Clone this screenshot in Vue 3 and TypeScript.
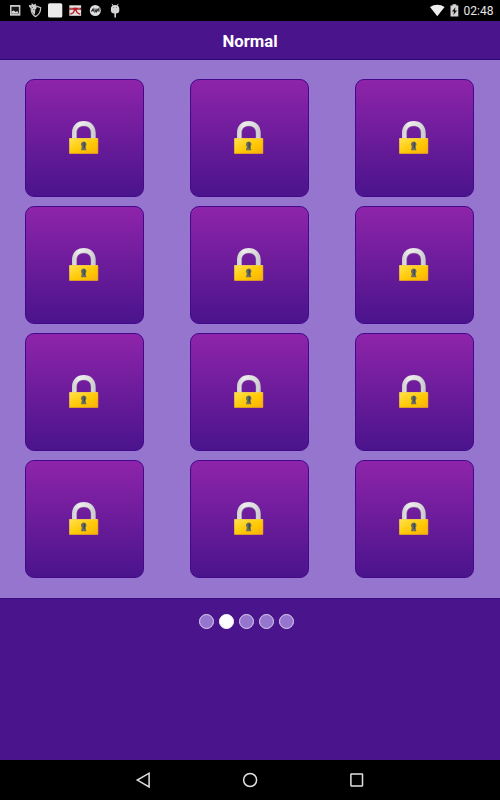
<script setup lang="ts">
const levels: number[] = Array.from({ length: 12 }, (_, i) => i + 1)
const pages: number[] = [0, 1, 2, 3, 4]
const currentPage = 1
</script>

<template>
  <div class="screen">
    <div class="status">
      <svg class="notifications" width="130" height="21" viewBox="0 0 130 21">
        <path d="M10 5h10.400v10.700H10z" fill="#c9c9c9" />
        <path d="M11.500 6.800h7.400v6.800h-7.400z" fill="#161616" />
        <path d="M11.500 13.600v-2l2.200-1 2 1.500 1.500-1 1.700 2.500z" fill="#d8d8d8" />
        <path d="M31 7.500l4.600-1.500 5.100 1.600c0 4.200-1.400 7.200-5.100 9-3.300-1.600-4.600-4.800-4.600-9.100z" fill="#090909" stroke="#c4c4c4" stroke-width="1.200" />
        <path d="M29 5l2.500.3.200-2.200 2 1.600 2.200-1.200-.3 2.500 1.200 1.700-1.400 1.900-.6 5.200-2-1.700c-.9-1.600-1.200-3.500-1.300-4.500L29.200 7z" fill="#cfcfcf" />
        <path d="M31.500 6.800l1.500.8M33.200 9.500l1.300.4" stroke="#444" stroke-width=".8" />
        <rect x="48" y="3.200" width="14.300" height="14.300" rx="1.500" fill="#eaeaea" />
        <path d="M69.300 5.300h11.800v10.500H69.300z" fill="#e3e3e3" />
        <path d="M69.300 7.800h11.800v2H69.300z" fill="#a61e26" />
        <path d="M70.500 8.800h2.200M77.800 8.800H80" stroke="#dca2a6" stroke-width=".6" />
        <path d="M74 7.700h2.500v3H74z" fill="#b71820" />
        <path d="M74.600 10l-1.300 2.800-3 1.300M75.900 10l1.300 2.800 3 1.300" fill="none" stroke="#bd1c26" stroke-width="1.400" />
        <circle cx="95.300" cy="10.500" r="5.500" fill="#dedede" />
        <path d="M91.300 11.500l1.800-2.700.6 2.700M91.800 10.600h1.700M95 8.500v3.300l1.400-1.500M97 8.500l-.3 3 2.200-2.800v3" fill="none" stroke="#303030" stroke-width="1.100" />
        <path d="M112 3.800l1.200 2.200M118.200 3.800L117 6" stroke="#ccc" stroke-width=".9" />
        <path d="M110.900 8.500c0-2.100 1.700-3.500 4.200-3.500s4.200 1.400 4.200 3.500v2.200c0 1.700-1.300 2.600-3.300 2.700v4.100h-1.600v-4.100c-2.200-.1-3.500-1-3.500-2.700z" fill="#d5d5d5" />
        <path d="M113.300 7.500h.8M116.200 7.500h.8" stroke="#666" stroke-width=".8" />
      </svg>
      <div class="system">
        <svg width="34" height="21" viewBox="0 0 34 21">
          <path d="M0 7.100c4-3.300 10.600-3.300 14.600 0L7.300 16.200z" fill="#ededed" />
          <path d="M20.500 5.500h2V4.200h3.800v1.300h2v11h-7.800z" fill="#d3d3d3" />
          <path d="M25.500 7.200l-3.600 4.300H24l-.6 3.500 3.700-4.600h-2.200z" fill="#111" />
        </svg>
        <span class="clock">02:48</span>
      </div>
    </div>
    <header class="header">Normal</header>
    <main class="levels">
      <button v-for="level in levels" :key="level" class="tile" type="button">
        <svg width="30" height="34" viewBox="0 -.6 30 34">
          <defs>
            <linearGradient id="steel" x1="0" y1="0" x2="1" y2="0">
              <stop offset="0" stop-color="#cecece" />
              <stop offset=".3" stop-color="#ededed" />
              <stop offset=".75" stop-color="#dddddd" />
              <stop offset="1" stop-color="#c6c6c8" />
            </linearGradient>
            <linearGradient id="gold" x1="0" y1="0" x2="1" y2="1">
              <stop offset="0" stop-color="#ffe351" />
              <stop offset=".42" stop-color="#ffce13" />
              <stop offset=".65" stop-color="#ffc400" />
              <stop offset="1" stop-color="#f5ad16" />
            </linearGradient>
          </defs>
          <path d="M3 18v-5.700C3 5.200 7.900.5 14.800.5s11.900 4.700 11.900 11.800V18H22v-5.700c0-4.300-2.700-6.800-7.200-6.800s-7.200 2.500-7.200 6.800V18z" fill="url(#steel)" />
          <path d="M7.600 18v-5.700c0-4.300 2.700-6.800 7.200-6.800S22 8 22 12.300V18" fill="none" stroke="#a6a0ad" stroke-width=".5" />
          <rect x=".2" y="17.700" width="28.900" height="15.400" rx=".4" fill="url(#gold)" />
          <path d="M.4 18.100h28.500" stroke="#ffde4d" stroke-width=".7" />
          <path d="M.4 32.800h28.500M28.800 18.200v14.500" stroke="#e89c25" stroke-width=".5" />
          <path d="M14.700 20.900a2.900 2.900 0 0 1 1.900 5l.8 3.700h-5.400l.8-3.700a2.900 2.900 0 0 1 1.900-5z" fill="#6f6c5d" />
          <path d="M15.200 22v5.500" stroke="#344954" stroke-width="1.300" />
        </svg>
      </button>
    </main>
    <footer class="pager">
      <span v-for="page in pages" :key="page" class="dot" :class="{ active: page === currentPage }" />
    </footer>
    <nav class="navigation">
      <svg width="20" height="20" viewBox="0 0 20 20"><path d="M16.100 3.200v13.700L4.300 10.050z" /></svg>
      <svg width="20" height="20" viewBox="0 0 20 20"><circle cx="10.100" cy="10" r="6.500" /></svg>
      <svg width="20" height="20" viewBox="0 0 20 20"><rect x="3.900" y="4" width="11.600" height="12" rx=".4" /></svg>
    </nav>
  </div>
</template>

<style>
body {
  margin: 0;
}
</style>

<style scoped>
.screen {
  width: 500px;
  height: 800px;
  display: flex;
  flex-direction: column;
  overflow: hidden;
  background: #4a148c;
  font-family: Roboto, "Liberation Sans", sans-serif;
}

.status {
  height: 21px;
  flex: none;
  display: flex;
  justify-content: space-between;
  background: #000;
}

.system {
  display: flex;
  padding-right: 6.500px;
}

.clock {
  width: 30px;
  color: #e6e6e6;
  font-size: 12px;
  line-height: 22px;
  white-space: nowrap;
}

.header {
  box-sizing: border-box;
  height: 39px;
  flex: none;
  border-bottom: 1px solid #310775;
  color: #fff;
  font-size: 16.700px;
  font-weight: 700;
  line-height: 41px;
  text-align: center;
}

.levels {
  box-sizing: border-box;
  height: 538px;
  flex: none;
  display: grid;
  grid-template-columns: repeat(3, 118.500px);
  grid-auto-rows: 118.500px;
  gap: 8.500px 46.500px;
  padding: 18.800px 25px;
  background: #9575cd;
}

.tile {
  display: flex;
  align-items: center;
  justify-content: center;
  padding: 0 1px 1.500px 0;
  border: 1px solid #43098a;
  border-radius: 9px;
  background: linear-gradient(#8e24aa, #4a148c);
}

.tile svg {
  display: block;
}

.pager {
  box-sizing: border-box;
  height: 162px;
  flex: none;
  display: flex;
  justify-content: center;
  gap: 5px;
  padding: 14.500px 7px 0 0;
  border-top: 1px solid #3f0b82;
}

.dot {
  box-sizing: border-box;
  width: 15px;
  height: 15px;
  border: 1px solid #ddd2ee;
  border-radius: 50%;
  background: #9575cd;
}

.dot.active {
  border-color: #fff;
  background: #fff;
}

.navigation {
  height: 40px;
  flex: none;
  display: flex;
  align-items: center;
  justify-content: center;
  gap: 87px;
  background: #000;
}

.navigation svg {
  fill: none;
  stroke: #e2e2e2;
  stroke-width: 1.500;
}
</style>
